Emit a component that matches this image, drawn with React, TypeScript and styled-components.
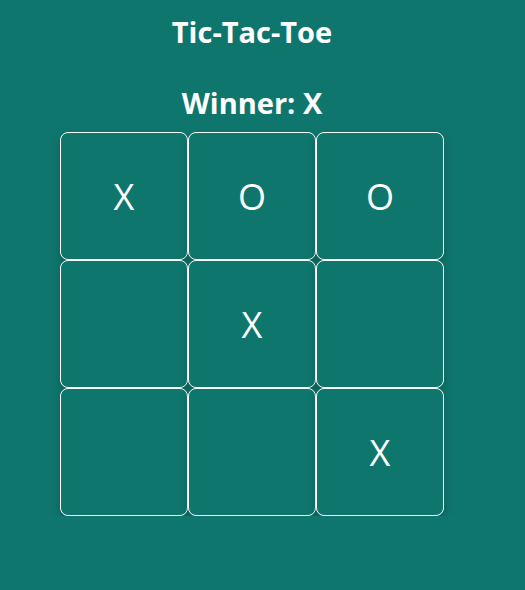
import styled, { createGlobalStyle } from 'styled-components'

const board = ['X', 'O', 'O', '', 'X', '', '', '', 'X']

const Global = createGlobalStyle`
  html, body {
    margin: 0;
    background: #0f766e;
    font-family: 'Open Sans', 'Noto Sans', sans-serif;
    color: #fff;
  }
`

const Page = styled.div`
  width: 504px;
  display: flex;
  flex-direction: column;
  align-items: center;
`

const Title = styled.h1`
  margin: 12px 0 0;
  font-size: 29px;
  font-weight: 700;
  line-height: 40px;
`

const Status = styled.h2`
  margin: 31px 0 0;
  font-size: 29px;
  font-weight: 700;
  line-height: 40px;
`

const Grid = styled.div`
  margin-top: 9px;
  display: grid;
  grid-template-columns: repeat(3, 128px);
  grid-template-rows: repeat(3, 128px);
`

const Cell = styled.button`
  box-sizing: border-box;
  width: 128px;
  height: 128px;
  border: 1px solid #fff;
  border-radius: 8px;
  background: #0f766e;
  color: #fff;
  font-family: 'Open Sans', 'Noto Sans', sans-serif;
  font-size: 36px;
  font-weight: 400;
  padding: 0;
  box-shadow: 0 4px 10px rgba(0, 0, 0, 0.2);
  cursor: pointer;
`

export default function App() {
  return (
    <>
      <Global />
      <Page>
        <Title>Tic-Tac-Toe</Title>
        <Status>Winner: X</Status>
        <Grid>
          {board.map((v, i) => (
            <Cell key={i}>{v}</Cell>
          ))}
        </Grid>
      </Page>
    </>
  )
}
